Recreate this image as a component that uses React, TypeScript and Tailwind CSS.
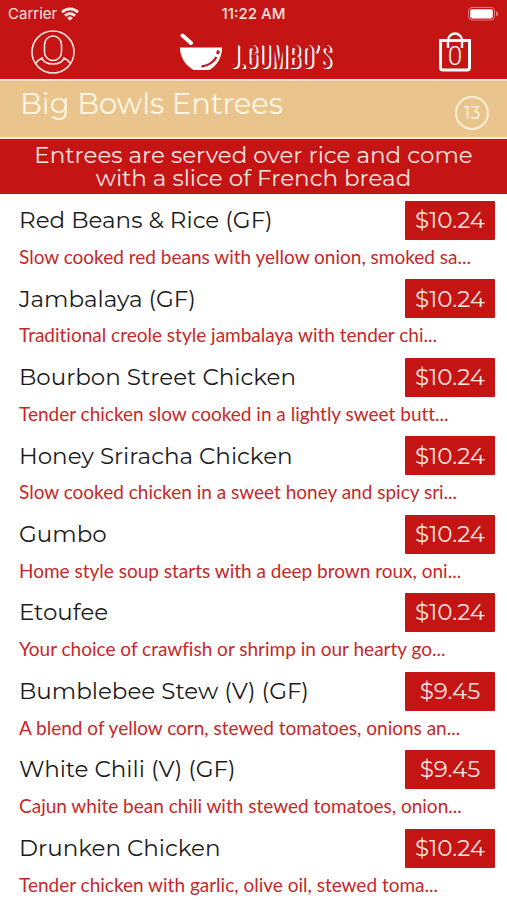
import type { ReactNode } from 'react';

interface MenuItem {
  name: string;
  description: string;
  price: string;
}

const items: MenuItem[] = [
  { name: 'Red Beans & Rice (GF)', description: 'Slow cooked red beans with yellow onion, smoked sa...', price: '$10.24' },
  { name: 'Jambalaya (GF)', description: 'Traditional creole style jambalaya with tender chi...', price: '$10.24' },
  { name: 'Bourbon Street Chicken', description: 'Tender chicken slow cooked in a lightly sweet butt...', price: '$10.24' },
  { name: 'Honey Sriracha Chicken', description: 'Slow cooked chicken in a sweet honey and spicy sri...', price: '$10.24' },
  { name: 'Gumbo', description: 'Home style soup starts with a deep brown roux, oni...', price: '$10.24' },
  { name: 'Etoufee', description: 'Your choice of crawfish or shrimp in our hearty go...', price: '$10.24' },
  { name: 'Bumblebee Stew (V) (GF)', description: 'A blend of yellow corn, stewed tomatoes, onions an...', price: '$9.45' },
  { name: 'White Chili (V) (GF)', description: 'Cajun white bean chili with stewed tomatoes, onion...', price: '$9.45' },
  { name: 'Drunken Chicken', description: 'Tender chicken with garlic, olive oil, stewed toma...', price: '$10.24' },
];

function WifiIcon() {
  return (
    <svg width="18" height="14" viewBox="0 0 18 14" fill="none" stroke="currentColor" strokeWidth="2.8" aria-hidden="true">
      <path d="M1 5.2a11.4 11.4 0 0 1 16 0" />
      <path d="M4 8.7a7.1 7.1 0 0 1 10 0" />
      <path d="M9 13.8 6.2 10.9a4 4 0 0 1 5.6 0Z" fill="currentColor" stroke="none" />
    </svg>
  );
}

function BatteryIcon() {
  return (
    <svg width="31" height="14" viewBox="0 0 31 14" aria-hidden="true">
      <rect x="0.5" y="0.5" width="26" height="12.5" rx="3.5" fill="none" stroke="#fff" strokeOpacity="0.45" />
      <rect x="2.2" y="2.2" width="22.6" height="9.2" rx="1.8" fill="#fff" />
      <path d="M28.3 4.6v4.6c1-.4 1.7-1.2 1.7-2.3s-.7-1.9-1.7-2.3Z" fill="#fff" fillOpacity="0.6" />
    </svg>
  );
}

function ProfileIcon() {
  return (
    <svg width="44" height="44" viewBox="0 0 44 44" fill="none" stroke="#ffe4e0" strokeWidth="1.6" aria-hidden="true">
      <circle cx="22" cy="22" r="21" />
      <rect x="13.5" y="6" width="17" height="24.5" rx="8.5" />
      <path d="M4.5 33.5c1.5-2.5 3.5-4 6.5-5.5 1.5 4.8 6 6 11 6s9.5-1.2 11-6c3 1.5 5 3 6.5 5.5" />
    </svg>
  );
}

function BowlIcon() {
  return (
    <svg width="44" height="38" viewBox="0 0 44 38" fill="#fff" aria-hidden="true">
      <path d="M3.5 2.5 12 10" stroke="#fff" strokeWidth="4" strokeLinecap="round" />
      <path d="M1 14.5h42c0 9.5-4.5 17.5-12.5 22.5h-16C6 32 1 24 1 14.5Z" />
      <path d="M37.5 24c-3 5-7 8.5-15 9.5" fill="none" stroke="#c41414" strokeWidth="2.4" />
      <path d="M39.5 17.5 38.5 21" fill="none" stroke="#c41414" strokeWidth="3" />
    </svg>
  );
}

function BagIcon() {
  return (
    <svg width="32" height="40" viewBox="0 0 32 40" fill="none" stroke="#fff" aria-hidden="true">
      <path d="M1.5 8.5h29v27a2.5 2.5 0 0 1-2.5 2.5H4a2.5 2.5 0 0 1-2.5-2.5Z" strokeWidth="3" />
      <path d="M9 16V8.5a7 7 0 0 1 14 0V16" strokeWidth="2.4" />
    </svg>
  );
}

function Price({ children }: { children: ReactNode }) {
  return (
    <span className="flex h-[39px] w-[90px] shrink-0 items-center justify-center rounded-[1px] bg-[#c41414] text-[23px] text-[#ffe4e0]">
      {children}
    </span>
  );
}

export default function App() {
  return (
    <div className="flex min-h-screen flex-col bg-white font-['Montserrat','Inter',sans-serif]">
      <header className="bg-[#c41414] pb-[3px] text-white">
        <div className="grid h-7 grid-cols-3 items-center px-2 font-['Inter',sans-serif] text-[15px] text-[#ffe4e0]">
          <div className="flex items-center gap-1">
            <span>Carrier</span>
            <WifiIcon />
          </div>
          <span className="text-center font-medium">11:22 AM</span>
          <div className="flex justify-end">
            <BatteryIcon />
          </div>
        </div>
        <div className="flex h-12 items-center justify-between pr-9 pl-[31px]">
          <button type="button" aria-label="Account">
            <ProfileIcon />
          </button>
          <a href="#" className="flex items-end gap-2 pr-1">
            <BowlIcon />
            <span className="font-['Bebas_Neue','Oswald',sans-serif] text-[32px] leading-6 text-[#c41414] [text-shadow:1px_0_#fff,2px_1px_#fff]">
              J.GUMBO’S
            </span>
          </a>
          <button type="button" aria-label="Shopping bag" className="relative">
            <BagIcon />
            <span className="absolute inset-x-0 bottom-1 text-center font-['Roboto',sans-serif] text-[26px] leading-6 font-light">0</span>
          </button>
        </div>
      </header>

      <div className="flex h-[60px] items-start justify-between border-y-2 border-[#fbe6cf] bg-[#e9c48c] pr-[18px] pl-5 text-[#fff6e6]">
        <h1 className="pt-[3px] text-[29px] leading-10">Big Bowls Entrees</h1>
        <span className="mt-[15px] flex size-[34px] items-center justify-center rounded-full border-2 border-[#fff0d8] text-[18px]">13</span>
      </div>

      <p className="bg-[#c41414] px-6 pt-[5px] pb-1 text-center text-[23px] leading-[23px] text-[#ffe4e0]">
        Entrees are served over rice and come with a slice of French bread
      </p>

      <ul className="grid flex-1 auto-rows-fr">
        {items.map(item => (
          <li key={item.name} className="pt-[7px] pr-3 pl-[19px]">
            <div className="flex items-center justify-between">
              <h2 className="text-[23px] text-[#1c1c1c]">{item.name}</h2>
              <Price>{item.price}</Price>
            </div>
            <p className="pt-[3px] font-['Lato',sans-serif] text-[19px] leading-7 text-[#c62828] [font-variant-ligatures:no-common-ligatures]">
              {item.description}
            </p>
          </li>
        ))}
      </ul>
    </div>
  );
}
